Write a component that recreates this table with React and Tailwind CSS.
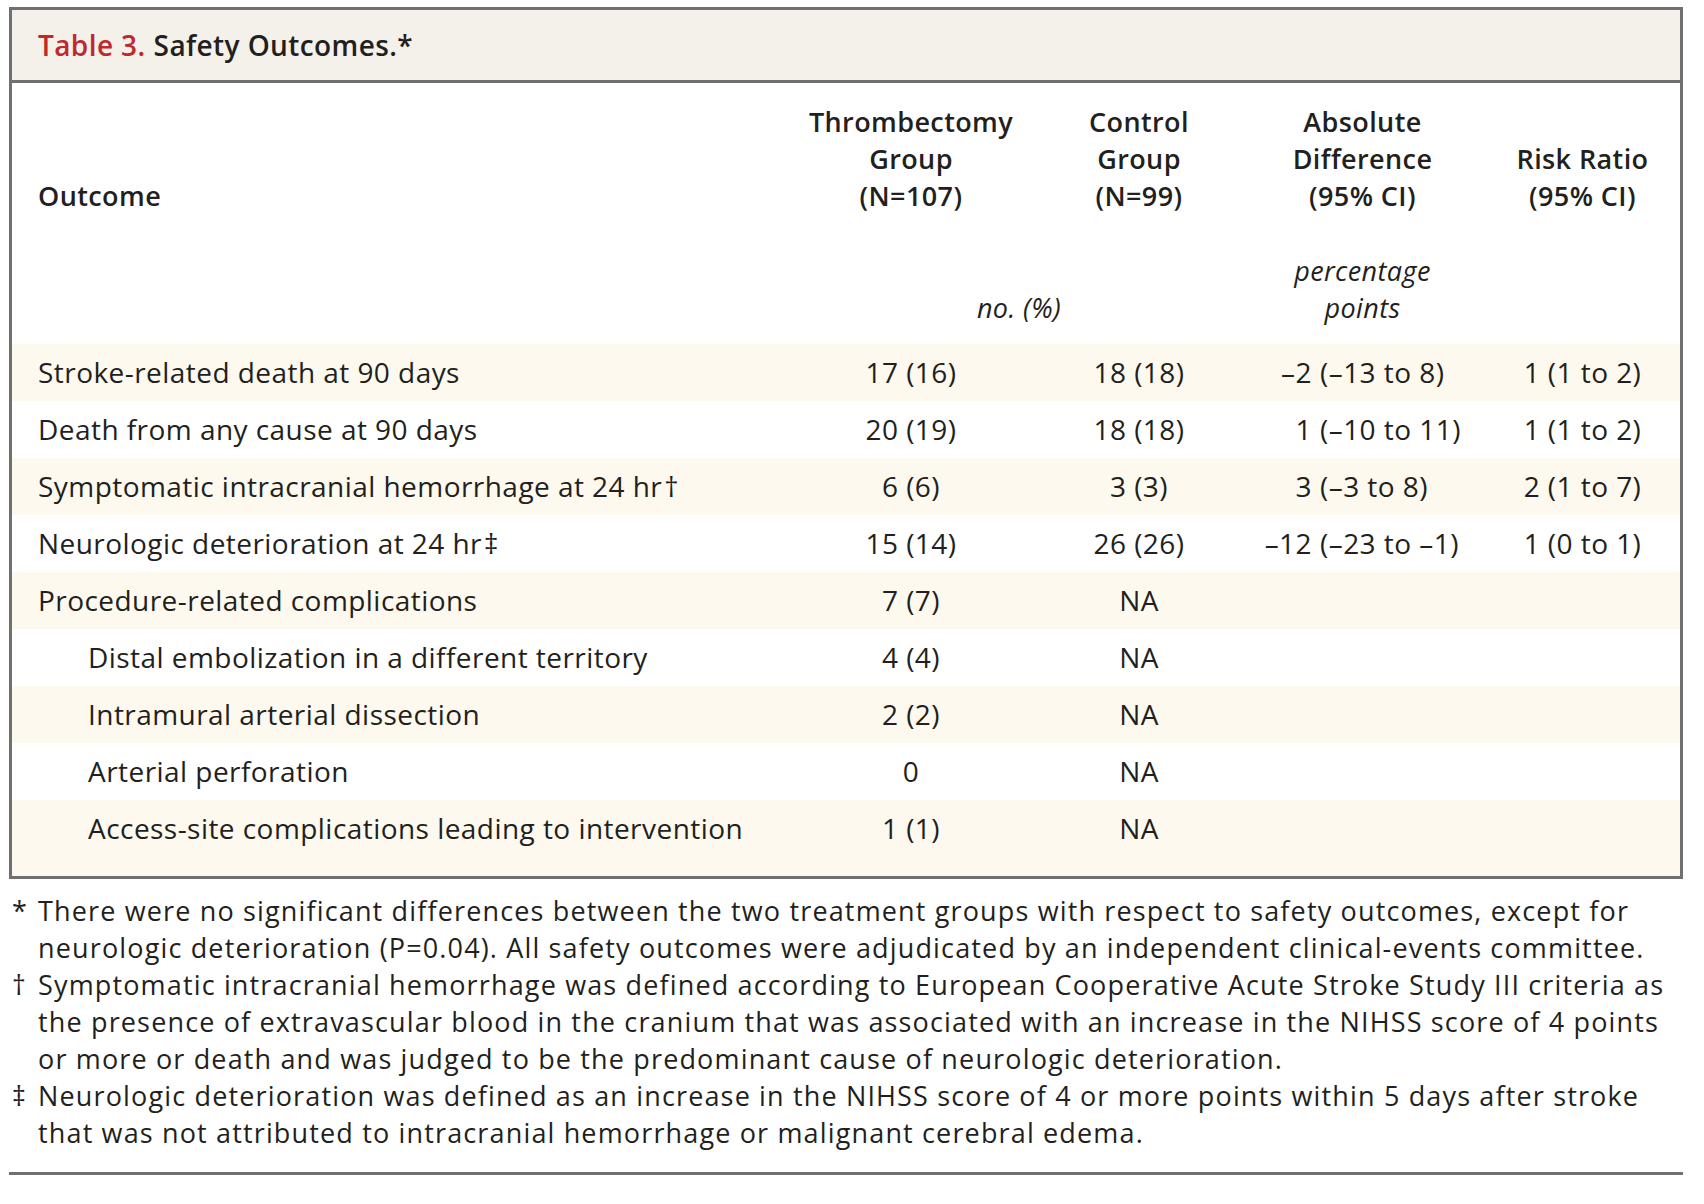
import React from "react";

const rows = [
  { label: "Stroke-related death at 90 days", t: "17 (16)", c: "18 (18)", d: ["–2", "(–13 to 8)"], r: "1 (1 to 2)" },
  { label: "Death from any cause at 90 days", t: "20 (19)", c: "18 (18)", d: ["1", "(–10 to 11)"], r: "1 (1 to 2)" },
  { label: "Symptomatic intracranial hemorrhage at 24 hr", mark: "†", t: "6 (6)", c: "3 (3)", d: ["3", "(–3 to 8)"], r: "2 (1 to 7)" },
  { label: "Neurologic deterioration at 24 hr", mark: "‡", t: "15 (14)", c: "26 (26)", d: ["–12", "(–23 to –1)"], r: "1 (0 to 1)" },
  { label: "Procedure-related complications", t: "7 (7)", c: "NA" },
  { label: "Distal embolization in a different territory", indent: true, t: "4 (4)", c: "NA" },
  { label: "Intramural arterial dissection", indent: true, t: "2 (2)", c: "NA" },
  { label: "Arterial perforation", indent: true, t: "0", c: "NA" },
  { label: "Access-site complications leading to intervention", indent: true, t: "1 (1)", c: "NA" },
];

const notes = [
  {
    sym: "*",
    lines: [
      "There were no significant differences between the two treatment groups with respect to safety outcomes, except for",
      "neurologic deterioration (P=0.04). All safety outcomes were adjudicated by an independent clinical-events committee.",
    ],
  },
  {
    sym: "†",
    lines: [
      "Symptomatic intracranial hemorrhage was defined according to European Cooperative Acute Stroke Study III criteria as",
      "the presence of extravascular blood in the cranium that was associated with an increase in the NIHSS score of 4 points",
      "or more or death and was judged to be the predominant cause of neurologic deterioration.",
    ],
  },
  {
    sym: "‡",
    lines: [
      "Neurologic deterioration was defined as an increase in the NIHSS score of 4 or more points within 5 days after stroke",
      "that was not attributed to intracranial hemorrhage or malignant cerebral edema.",
    ],
  },
];

const grid = "grid grid-cols-[784px_230px_226px_221px_1fr]";

function App() {
  return (
    <div className="min-h-[1204px] bg-white text-[#231f20] font-['Open_Sans',sans-serif]">
      <div className="ml-[9px] w-[1674px] pt-[7px]">
        <div className="border-[3px] border-[#707070]">
          {/* title bar */}
          <div className="h-[73px] flex items-center pl-[26px] bg-[#f4f1eb] border-b-[3px] border-[#707070] text-[28px] tracking-[0.4px] font-semibold">
            <span className="text-[#c1272d]">Table 3.</span>
            <span className="ml-[8px]">Safety Outcomes.*</span>
          </div>

          {/* column headers */}
          <div className={`${grid} pt-[20px] text-[27px] tracking-[0.4px] leading-[37px] font-semibold items-end text-center`}>
            <div className="text-left pl-[26px]">Outcome</div>
            <div>Thrombectomy<br />Group<br />(N=107)</div>
            <div>Control<br />Group<br />(N=99)</div>
            <div>Absolute<br />Difference<br />(95% CI)</div>
            <div className="pl-[12px]">Risk Ratio<br />(95% CI)</div>
          </div>
          <div className={`${grid} mt-[38px] pb-[18px] text-[27px] tracking-[0.4px] leading-[37px] italic items-end text-center`}>
            <div />
            <div className="col-span-2 pr-[10px]">no. (%)</div>
            <div>percentage<br />points</div>
            <div />
          </div>

          {/* body rows */}
          {rows.map((row, i) => (
            <div
              key={row.label}
              className={`${grid} items-center text-[28px] tracking-[0.45px] leading-[57px] ${i % 2 === 0 ? "bg-[#fdf9ee]" : "bg-white"} ${i === rows.length - 1 ? "pb-[19px]" : ""}`}
            >
              <div className={row.indent ? "pl-[76px]" : "pl-[26px]"}>
                {row.label}
                {row.mark && <span className="ml-[2px]">{row.mark}</span>}
              </div>
              <div className="text-center">{row.t}</div>
              <div className="text-center">{row.c}</div>
              <div className="flex">
                {row.d && (
                  <>
                    <span className="w-[60px] text-right">{row.d[0]}</span>
                    <span className="ml-[8px]">{row.d[1]}</span>
                  </>
                )}
              </div>
              <div className="text-center pl-[12px]">{row.r}</div>
            </div>
          ))}
        </div>

        {/* footnotes */}
        <div className="mt-[13px] text-[27px] tracking-[1.15px] leading-[37px]">
          {notes.map((n) => (
            <div key={n.sym} className="flex">
              <div className="w-[29px] shrink-0 pl-[3px]">{n.sym}</div>
              <div>
                {n.lines.map((l) => (
                  <div key={l} className="whitespace-nowrap">{l}</div>
                ))}
              </div>
            </div>
          ))}
        </div>

        <div className="mt-[21px] h-[3px] bg-[#707070]" />
      </div>
    </div>
  );
}

export default App;
